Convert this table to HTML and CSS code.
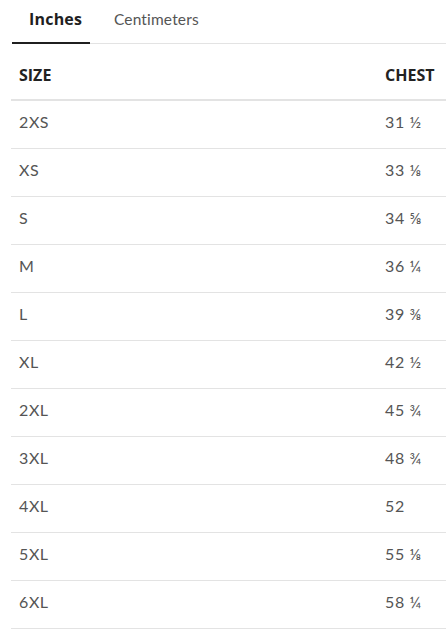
FILE: index.html
```html
<!DOCTYPE html>
<html>
<head>
<meta charset="utf-8">
<link rel="stylesheet" href="styles.css">
</head>
<body>
<div class="page">
  <div class="tabs">
    <div class="tab active">Inches</div>
    <div class="tab">Centimeters</div>
  </div>
  <table class="chart">
    <thead>
      <tr><th class="c-size">SIZE</th><th class="c-chest">CHEST</th></tr>
    </thead>
    <tbody>
      <tr><td>2XS</td><td>31 ½</td></tr>
      <tr><td>XS</td><td>33 ⅛</td></tr>
      <tr><td>S</td><td>34 ⅝</td></tr>
      <tr><td>M</td><td>36 ¼</td></tr>
      <tr><td>L</td><td>39 ⅜</td></tr>
      <tr><td>XL</td><td>42 ½</td></tr>
      <tr><td>2XL</td><td>45 ¾</td></tr>
      <tr><td>3XL</td><td>48 ¾</td></tr>
      <tr><td>4XL</td><td>52</td></tr>
      <tr><td>5XL</td><td>55 ⅛</td></tr>
      <tr><td>6XL</td><td>58 ¼</td></tr>
    </tbody>
  </table>
</div>
</body>
</html>
```

FILE: styles.css
```css
html, body {
  margin: 0;
  padding: 0;
  background: #fff;
  overflow: hidden;
}
.page {
  width: 446px;
  padding-left: 11px;
  box-sizing: border-box;
  font-family: "Lato", "Open Sans", sans-serif;
  color: #555;
}
.tabs {
  display: flex;
  margin-left: 1px;
  border-bottom: 1px solid #e3e3e3;
  height: 43px;
}
.tab {
  font-size: 15.5px;
  letter-spacing: 0.15px;
  padding: 0 16px 0 24px;
  line-height: 38px;
  color: #555;
  box-sizing: border-box;
  height: 44px;
}
.tab.active {
  font-weight: 700;
  color: #1f1f1f;
  padding: 0 4px 0 17px;
  width: 78px;
  border-bottom: 2px solid #1f1f1f;
  font-family: "Open Sans", sans-serif;
  font-size: 16px;
  letter-spacing: 0.2px;
}
.chart {
  width: 435px;
  border-collapse: collapse;
  margin-top: 7px;
}
.chart th {
  font-family: "Open Sans", sans-serif;
  font-weight: 700;
  font-size: 16px;
  color: #222;
  text-align: left;
  height: 47px;
  padding: 0 8px 1px;
  border-bottom: 2px solid #e3e3e3;
}
.chart td {
  font-size: 16px;
  letter-spacing: 0.6px;
  color: #555;
  height: 48px;
  padding: 0 8px 6px;
  box-sizing: border-box;
  border-bottom: 1px solid #e3e3e3;
}
.chart .c-chest {
  width: 53px;
}
```
